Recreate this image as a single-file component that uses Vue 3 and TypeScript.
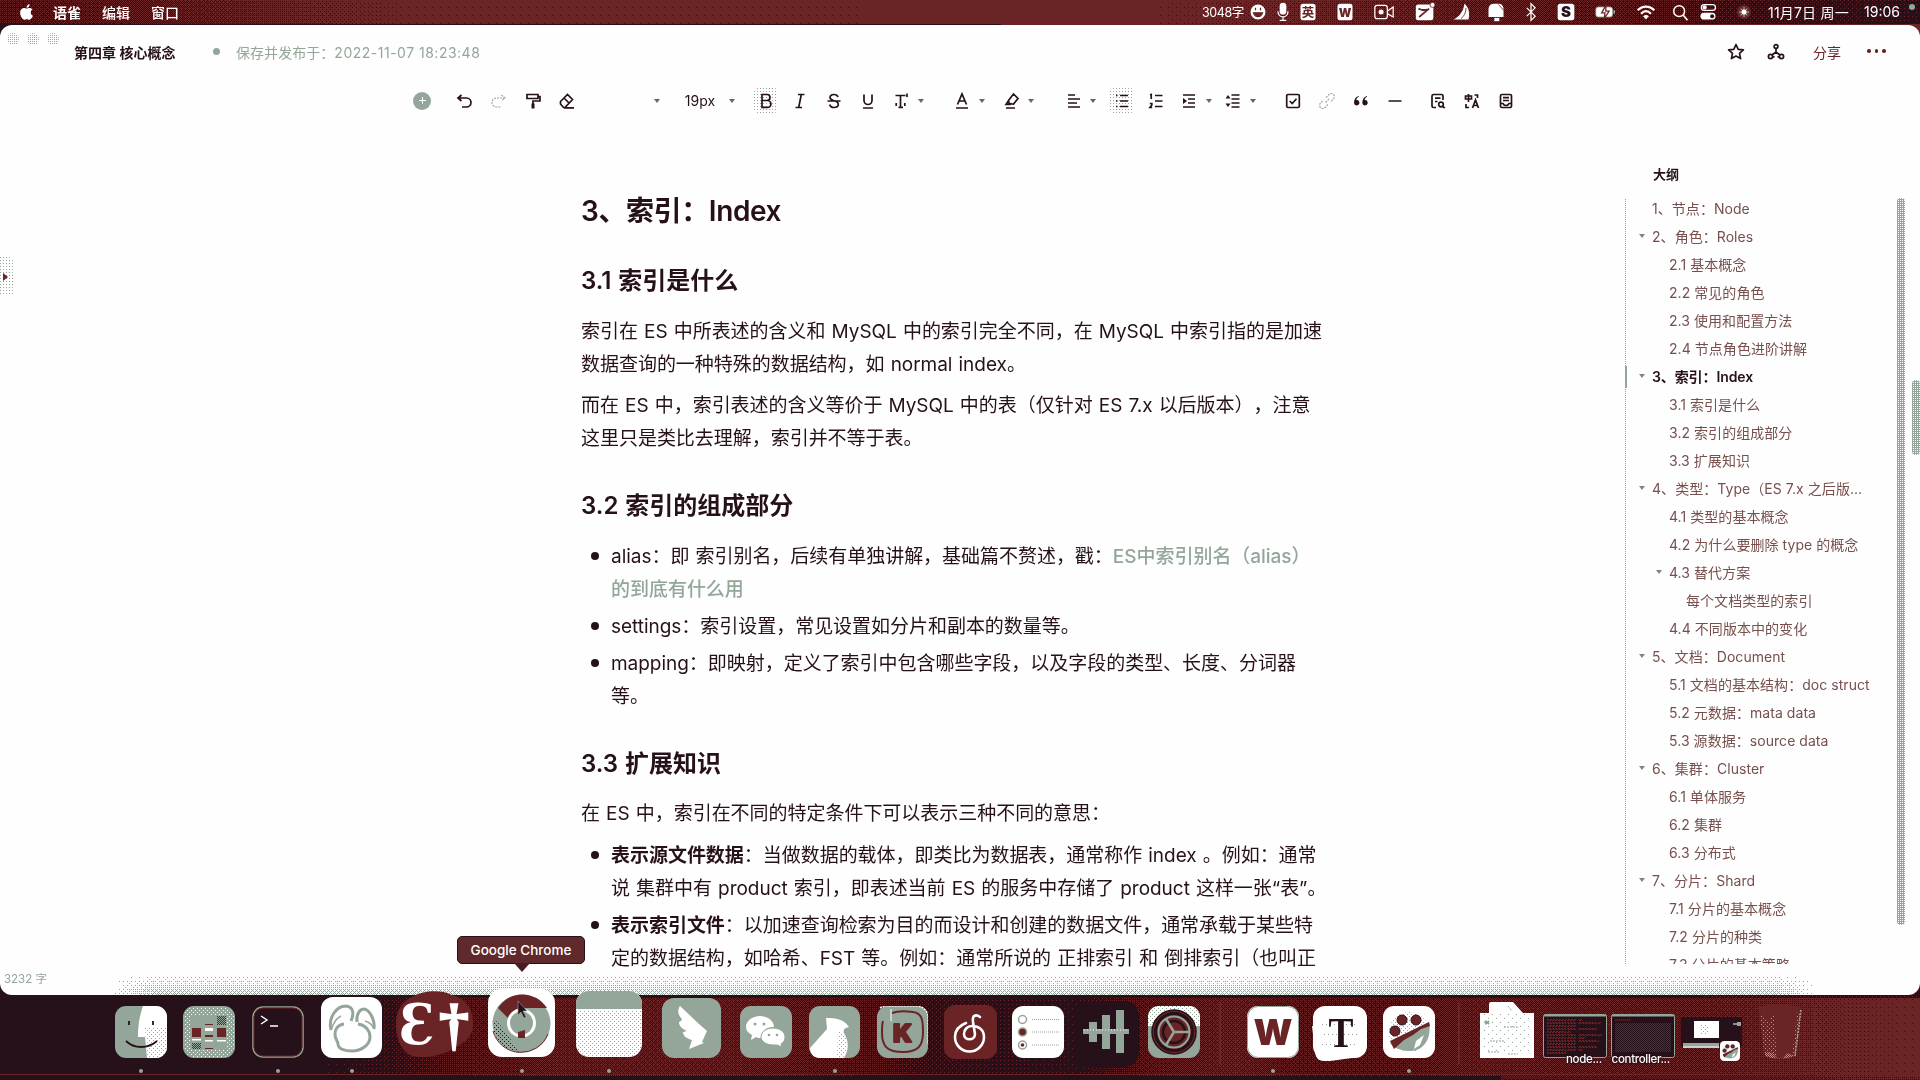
<script setup lang="ts">
import { onMounted, ref } from 'vue'

type Stop = [number, number]

const desk = ref<HTMLCanvasElement | null>(null)
const shade = ref<HTMLCanvasElement | null>(null)

const topStops: Stop[] = [[0, 0.3], [80, 0.42], [200, 0.58], [310, 0.82], [400, 0.98], [1150, 1], [1260, 0.88], [1430, 0.6], [1600, 0.42], [1720, 0.16], [1920, 0.05]]
const lowStops: Stop[] = [[0, 0], [320, 0], [390, 0.08], [480, 0.35], [560, 0.58], [720, 0.6], [800, 0.45], [880, 0.25], [930, 0.1], [1080, 0.03], [1150, 0.4], [1235, 0.65], [1300, 0.35], [1400, 0.35], [1480, 0.6], [1560, 0.52], [1700, 0.55], [1780, 0.72], [1850, 0.93], [1920, 1]]

const bayer = [
  0, 32, 8, 40, 2, 34, 10, 42, 48, 16, 56, 24, 50, 18, 58, 26,
  12, 44, 4, 36, 14, 46, 6, 38, 60, 28, 52, 20, 62, 30, 54, 22,
  3, 35, 11, 43, 1, 33, 9, 41, 51, 19, 59, 27, 49, 17, 57, 25,
  15, 47, 7, 39, 13, 45, 5, 37, 63, 31, 55, 23, 61, 29, 53, 21,
]

function tone(stops: Stop[], x: number): number {
  for (let i = 1; i < stops.length; i++) {
    const [x1, v1] = stops[i]
    const [x0, v0] = stops[i - 1]
    if (x <= x1) return v0 + ((v1 - v0) * (x - x0)) / (x1 - x0)
  }
  return stops[stops.length - 1][1]
}

function halftone(c: HTMLCanvasElement | null, rgb: number[], density: (x: number, y: number) => number) {
  const ctx = c?.getContext('2d')
  if (!c || !ctx) return
  const img = ctx.createImageData(c.width, c.height)
  for (let y = 0; y < c.height; y++) {
    for (let x = 0; x < c.width; x++) {
      const t = (bayer[(y % 8) * 8 + (x % 8)] + 0.5) / 64
      if (density(x, y) > t) {
        const i = (y * c.width + x) * 4
        img.data[i] = rgb[0]
        img.data[i + 1] = rgb[1]
        img.data[i + 2] = rgb[2]
        img.data[i + 3] = 255
      }
    }
  }
  ctx.putImageData(img, 0, 0)
}

onMounted(() => {
  halftone(desk.value, [107, 36, 37], (x, y) => {
    if (y < 24) return tone(topStops, x)
    if (y < 40) return x > 1000 ? 1 : 0
    if (y < 998) return x > 1700 ? 0.1 : 0
    if (y > 1075) return x > 1500 ? tone(lowStops, x) * 0.8 : 0.02
    return tone(lowStops, x)
  })
  halftone(shade.value, [147, 166, 153], (x, y) => {
    const edge = Math.min(1, x / 40, (1705 - x) / 40)
    return Math.max(0, ((y - 1) / 20) * 0.4 * edge)
  })
})

interface Icon { x: number; k: string; d?: string; f?: string; t?: string; w?: number }
// x is the centre of each control on the bar
const tools: Icon[] = [
  { x: 422, k: 'plus' },
  { x: 465, k: 'i', d: 'M6.5 4 3 7l3.5 3M3 7h8.5a4.5 4.5 0 0 1 0 9H7' },
  { x: 498, k: 'g', d: 'M13.5 4 17 7l-3.500 3M17 7H8.500a4.500 4.500 0 0 0 0 9H13' },
  { x: 533, k: 'i', d: 'M4 3.500h11v4H4zM15 5.500h2v4.500h-7v3', f: 'M8.500 12.500h3v5h-3z' },
  { x: 567, k: 'i', d: 'M3.500 10.500 10.500 3.500l5 5-7.500 8H6.500l-3-3.500zM7 7l5.500 5.500M7 16.800h10' },
  { x: 657, k: 'c' },
  { x: 700, k: 't', t: '19px', w: 40 },
  { x: 732, k: 'c' },
  { x: 766, k: 'on', d: 'M6 3.500h5a3 3 0 0 1 0 6H6zM6 9.500h5.500a3.300 3.300 0 0 1 0 6.800H6z' },
  { x: 800, k: 'i', d: 'M8 3.500h6.500M5.500 16.500H12M11.300 3.500 8.700 16.500' },
  { x: 834, k: 'i', d: 'M14 6c-.5-1.700-2-2.500-4-2.500-2.500 0-4 1.200-4 3 0 4 8.300 2.500 8.300 6.800 0 2-1.800 3.200-4.200 3.200-2.500 0-4-1-4.400-3M3.500 10h13' },
  { x: 868, k: 'i', d: 'M6 3.500v6a4 4 0 0 0 8 0v-6M5 17h10' },
  { x: 902, k: 'i', d: 'M3.500 4.500h10M8.500 4.500v11.500M6.500 16.300h4.500M4.200 12v3M12.800 12v3M15 2.500v3.500' },
  { x: 921, k: 'c' },
  { x: 962, k: 'i', d: 'M5.500 13.500 10 3l4.500 10.500M7 10h6M4 17h12' },
  { x: 982, k: 'c' },
  { x: 1012, k: 'i', d: 'M11.500 3 16 7.500l-4.500 5.500-4.500-.5-.5-3zM7 9l-3 4.500h4l1.500-1.500M4 17h9' },
  { x: 1031, k: 'c' },
  { x: 1074, k: 'i', d: 'M4 4h7M4 8h12M4 12h9M4 16h12' },
  { x: 1093, k: 'c' },
  { x: 1122, k: 'on', d: 'M8 4.500h8M8 10h8M8 15.500h8M4 4.500h1.500M4 10h1.500M4 15.500h1.500' },
  { x: 1156, k: 'i', d: 'M9 4.500h7.500M9 10h7.500M9 15.500h7.500M4 4l1.200-.5V8M3.800 12.500h2v1.500L4 16.500h2.200' },
  { x: 1189, k: 'i', d: 'M4 4h12M9 8h7M9 12h7M4 16h12', f: 'M4 7l4 3-4 3z' },
  { x: 1209, k: 'c' },
  { x: 1233, k: 'i', d: 'M8.500 4h8M8.500 8h8M8.500 12h8M8.500 16h8', f: 'M2.500 7.500 5 4l2.500 3.500zM2.500 12.500 5 16l2.500-3.500z' },
  { x: 1253, k: 'c' },
  { x: 1293, k: 'i', d: 'M5 3.500h10a1.300 1.300 0 0 1 1.300 1.300v10.400A1.300 1.300 0 0 1 15 16.500H5a1.300 1.300 0 0 1-1.300-1.300V4.800A1.300 1.300 0 0 1 5 3.500zM6.700 10l2.500 2.500 4.300-4.800' },
  { x: 1327, k: 'g', d: 'm8.500 11.500 4-4M9 6.500l3-3a3 3 0 0 1 4.500 4.500l-3 3M11 13.500l-3 3A3 3 0 0 1 3.500 12l3-3' },
  { x: 1361, k: 'i', f: 'M7.500 5c-3 1-4.500 3.500-4.500 7a2.700 2.700 0 1 0 2.300-3c.2-1.500 1-2.700 2.600-3.300zM15.800 5c-3 1-4.500 3.500-4.500 7a2.700 2.700 0 1 0 2.300-3c.2-1.500 1-2.700 2.600-3.300z' },
  { x: 1395, k: 'i', d: 'M3.500 10h13' },
  { x: 1438, k: 'i', d: 'M8 16.500H5.500a1.500 1.500 0 0 1-1.500-1.500V5a1.500 1.500 0 0 1 1.500-1.500h8A1.500 1.500 0 0 1 15 5v4M7 7.200h5.500M7 10.500h2.500M15.300 13.500a2.300 2.300 0 1 1-4.600 0 2.300 2.300 0 0 1 4.600 0M14.700 15.200l2 2' },
  { x: 1472, k: 'i', d: 'M3.500 5h6v3h-6zM6.500 3v8M12.500 4h3v3M4 13v3.500h3M10.500 17 13.500 9l3 8M11.500 14.500h4' },
  { x: 1506, k: 'i', d: 'M6 3.500h8A1.500 1.500 0 0 1 15.500 5v10a1.500 1.500 0 0 1-1.500 1.500H6A1.500 1.500 0 0 1 4.500 15V5A1.500 1.500 0 0 1 6 3.500zM7 6.700h6M7 9.500h6M4.500 12.500H7c.5 1.500 1.500 2 3 2s2.500-.5 3-2h2.500' },
]
const toolWidth = (t: Icon) => (t.k === 'c' ? 8 : t.k === 'on' ? 24 : t.w ?? 20)
const toolGap = (i: number) => {
  const t = tools[i]
  const left = t.x - toolWidth(t) / 2
  if (i === 0) return left
  const p = tools[i - 1]
  return left - (p.x + toolWidth(p) / 2)
}

interface Entry { t: string; l: number; c?: boolean; on?: boolean }
const outline: Entry[] = [
  { t: '1、节点：Node', l: 0 },
  { t: '2、角色：Roles', l: 0, c: true },
  { t: '2.1 基本概念', l: 1 },
  { t: '2.2 常见的角色', l: 1 },
  { t: '2.3 使用和配置方法', l: 1 },
  { t: '2.4 节点角色进阶讲解', l: 1 },
  { t: '3、索引：Index', l: 0, c: true, on: true },
  { t: '3.1 索引是什么', l: 1 },
  { t: '3.2 索引的组成部分', l: 1 },
  { t: '3.3 扩展知识', l: 1 },
  { t: '4、类型：Type（ES 7.x 之后版...', l: 0, c: true },
  { t: '4.1 类型的基本概念', l: 1 },
  { t: '4.2 为什么要删除 type 的概念', l: 1 },
  { t: '4.3 替代方案', l: 1, c: true },
  { t: '每个文档类型的索引', l: 2 },
  { t: '4.4 不同版本中的变化', l: 1 },
  { t: '5、文档：Document', l: 0, c: true },
  { t: '5.1 文档的基本结构：doc struct', l: 1 },
  { t: '5.2 元数据：mata data', l: 1 },
  { t: '5.3 源数据：source data', l: 1 },
  { t: '6、集群：Cluster', l: 0, c: true },
  { t: '6.1 单体服务', l: 1 },
  { t: '6.2 集群', l: 1 },
  { t: '6.3 分布式', l: 1 },
  { t: '7、分片：Shard', l: 0, c: true },
  { t: '7.1 分片的基本概念', l: 1 },
  { t: '7.2 分片的种类', l: 1 },
  { t: '7.3 分片的基本策略', l: 1 },
]

const G = '#93a699'
const R = '#6b2425'
const K = '#26111b'
const paw = `<rect width="52" height="52" rx="11" fill="#fff"/><circle cx="26" cy="26" r="20" fill="url(#dotG)"/><circle cx="19" cy="14" r="5" fill="${R}" stroke="${K}"/><circle cx="33" cy="14" r="5" fill="${R}" stroke="${K}"/><circle cx="12" cy="25" r="5" fill="${R}" stroke="${K}"/><path d="M7 37 46 16c3 16-5 29-19 29-7 0-15-2-20-8z" fill="${G}"/><path d="M7 35 46 16l1 4-9 3-8 6-9 5-10 9z" fill="${R}"/><path d="m33 35 8-6-4 10-6 4z" fill="#fff"/>`

interface App { x: number; w: number; h: number; b: number; vb: string; art: string; run?: boolean; cap?: string }
// b is the distance from the bottom of the icon to the bottom of the row
const apps: App[] = [
  { x: 115, w: 52, h: 52, b: 0, vb: '0 0 52 52', run: true, art: `<rect width="52" height="52" rx="11" fill="${G}"/><path d="M28 0h13a11 11 0 0 1 11 11v30a11 11 0 0 1-11 11h-9l-2-21h-7c0-14 2-22 5-31z" fill="#fff"/><path d="M30 22h22v19a11 11 0 0 1-11 11h-9z" fill="url(#dotG)"/><path d="M14 15v4M38 15v4M11 35c8 8 22 8 31 0" fill="none" stroke="${K}" stroke-width="1.800"/>` },
  { x: 183, w: 52, h: 52, b: 0, vb: '0 0 52 52', art: `<rect width="52" height="52" rx="11" fill="${G}"/><rect x="1" y="1" width="50" height="50" rx="10" fill="url(#dotW)"/><rect x="8" y="10" width="36" height="34" fill="${G}"/><path d="M9 22h9v9H9zM34 22h9v9h-9z" fill="${R}"/><path d="M34 10h9v9h-9zM9 37h9v6H9z" fill="url(#dotR)"/><path d="M22 22h8v3h-8zM9 33h9v1.500H9zM22 34h8v1.500h-8zM34 34h9v1.500h-9z" fill="#fff"/><path d="M22 29h8v2h-8zM22 42h8v1h-8zM22 18h8v1h-8z" fill="${R}"/>` },
  { x: 252, w: 52, h: 52, b: 0, vb: '0 0 52 52', run: true, art: `<rect x="1" y="1" width="50" height="50" rx="10" fill="${K}" stroke="${G}" stroke-width="1.500"/><rect x="2" y="2" width="48" height="48" rx="9" fill="none" stroke="${R}"/><path d="M9 10l6 4-6 4M18 20h8" fill="none" stroke="#fff" stroke-width="1.500"/>` },
  { x: 321, w: 61, h: 61, b: 0, vb: '0 0 61 61', run: true, art: `<rect width="61" height="61" rx="12" fill="#fff"/><g fill="none" stroke="${G}" stroke-width="3"><path d="M10 33C7 21 15 9 25 9c8 1 8 8 5 15M36 25c-1-8 3-13 7-13 6 1 11 11 10 20"/><path d="M23 27c-7 1-9 6-9 10 0 6 3 7 3 10 0 5 7 7 14 7 9 0 18-6 18-14 0-7-5-12-12-13"/><path d="M10 33c2-6 5-12 10-14" stroke-width="1.500"/><path d="M53 32c-2-5-5-7-9-8" stroke-width="1.500"/></g>` },
  { x: 395, w: 79, h: 66, b: 1, vb: '0 0 79 66', art: `<path d="M19 5C28 0 45-2 57 4c15 3 22 17 21 30 0 12-10 19-20 24-13 7-33 12-45 5C-1 52-2 26 6 15c3-5 8-8 13-10z" fill="${R}"/><text x="4" y="53" font-family="DejaVu Serif" font-weight="bold" font-size="56" textLength="36" lengthAdjust="spacingAndGlyphs" fill="#fff">Ɛ</text><text x="44" y="53" font-family="Liberation Serif" font-weight="bold" font-size="58" textLength="30" lengthAdjust="spacingAndGlyphs" fill="#fff" stroke="#fff" stroke-width="1.500">†</text>` },
  { x: 488, w: 67, h: 68, b: 1, vb: '0 0 67 68', run: true, art: `<rect width="67" height="68" rx="14" fill="#fff"/><circle cx="33.500" cy="34.500" r="29" fill="${G}"/><path d="M10 19a29 29 0 0 1 49 0H34c-8 0-12 6-13 11z" fill="${R}"/><path d="M5 30c8 4 17 20 26 33C13 62 3 45 5 30z" fill="url(#dotK)"/><circle cx="33.500" cy="34" r="14.500" fill="#fff"/><circle cx="33.500" cy="34" r="11.500" fill="${G}"/><path d="M5 42a29 29 0 0 0 55 3" fill="none" stroke="${R}"/><path d="M30 43l7-2v8h-7z" fill="${R}"/>` },
  { x: 576, w: 66, h: 66, b: 1, vb: '0 0 66 66', run: true, art: `<rect width="66" height="66" rx="13" fill="#fff"/><path d="M0 18V13A13 13 0 0 1 13 0h40a13 13 0 0 1 13 13v5z" fill="${G}"/><path d="M0 19h66v34a13 13 0 0 1-13 13H13A13 13 0 0 1 0 53z" fill="url(#dotG)"/>` },
  { x: 662, w: 59, h: 60, b: 0, vb: '0 0 59 60', art: `<rect width="59" height="60" rx="12" fill="${G}"/><path d="M18 8l19 18 8 7-5 11 2 1-15 6 3-9c-7-2-9-5-9-8l4-1c-5-2-8-5-8-9 2-1 2-1 3-3-4-4-5-9-2-13z" fill="#fff"/>` },
  { x: 740, w: 52, h: 52, b: 0, vb: '0 0 52 52', art: `<rect width="52" height="52" rx="11" fill="${G}"/><path d="M20 10c8 0 14 5 14 11-8 0-13 4-13 11-2 0-4 0-5-1l-5 3 1-5c-4-2-6-5-6-8 0-6 6-11 14-11z" fill="#fff"/><path d="M33 22c7 0 12 4 12 9 0 3-1 5-4 7l1 3-5-2h-4c-7 0-12-4-12-8 0-5 5-9 12-9z" fill="#fff" stroke="${G}"/><g fill="${G}"><circle cx="15" cy="18" r="1.500"/><circle cx="24" cy="18" r="1.500"/><circle cx="29" cy="29" r="1.300"/><circle cx="37" cy="29" r="1.300"/></g>` },
  { x: 809, w: 51, h: 52, b: 0, vb: '0 0 51 52', run: true, art: `<rect width="51" height="52" rx="11" fill="${G}"/><path d="M17 12c8 0 17 0 23 9-4 1-6 2-5 6 5 8 5 17 0 25H11C5 52 1 48 1 42l17-19z" fill="#fff"/><path d="M29 26h5c6 9 5 18 0 26h-6z" fill="url(#dotG)"/>` },
  { x: 877, w: 51, h: 52, b: 0, vb: '0 0 51 52', art: `<rect width="51" height="52" rx="11" fill="${G}"/><path d="M3 2c3-2 5-2 9-2h27c7 0 12 5 12 11v27" fill="none" stroke="#fff" stroke-width="1.500" stroke-dasharray="2 1"/><path d="M15 7c5-2 14-2 21-1 9 1 10 8 10 20 0 14-5 20-20 20S5 41 5 27c0-6 0-9 1-12" fill="none" stroke="${R}" stroke-width="2"/><path d="M14 3v12" stroke="#fff"/><text x="25.500" y="35.500" text-anchor="middle" font-family="Inter" font-weight="900" font-size="25" fill="${R}" stroke="${R}" stroke-width="2" stroke-linejoin="round">K</text>` },
  { x: 944, w: 53, h: 54, b: -1, vb: '0 0 53 54', art: `<rect width="53" height="54" rx="11" fill="${R}"/><path d="M22 18c-8 3-11 8-11 14a14.500 14.500 0 0 0 29 0c0-7-5-11-12-11-5 0-8 4-8 8 0 7 11 7 11 0l-2-12c-1-7 3-8 7-5" fill="none" stroke="#fff" stroke-width="2.600" stroke-linecap="round"/>` },
  { x: 1012, w: 52, h: 52, b: 0, vb: '0 0 52 52', art: `<rect width="52" height="52" rx="11" fill="#fff"/><g fill="#fff" stroke="${G}" stroke-width="1.500"><circle cx="10.500" cy="13.500" r="4"/><circle cx="10.500" cy="26" r="4" fill="${R}"/><circle cx="10.500" cy="39" r="4"/></g><circle cx="10.500" cy="39" r="1.800" fill="${R}"/><path d="M20 13.500h27M20 26h27M20 39h27" stroke="${G}" stroke-dasharray="1 1"/>` },
  { x: 1073, w: 66, h: 66, b: -9, vb: '0 0 66 66', art: `<rect width="66" height="66" rx="15" fill="${K}"/><path d="M10 28h46v5H10z" fill="${G}"/><path d="M16 21h8v20h-8zM29 14h8v34h-8zM43 9h8v43h-8z" fill="${G}"/><path d="M11 29h44" stroke="#fff" stroke-dasharray="1 2"/>` },
  { x: 1148, w: 52, h: 52, b: 0, vb: '0 0 52 52', art: `<rect width="52" height="52" rx="11" fill="${G}"/><path d="M0 20v-9A11 11 0 0 1 11 0h30a11 11 0 0 1 11 11v9z" fill="#fff"/><rect width="52" height="52" rx="11" fill="url(#dotG)"/><circle cx="26" cy="26" r="22" fill="${R}" stroke="${K}" stroke-width="1.500"/><circle cx="26" cy="26" r="18.500" fill="none" stroke="${K}" stroke-width="3"/><circle cx="26" cy="26" r="15.500" fill="none" stroke="${G}" stroke-width="2"/><circle cx="26" cy="26" r="11" fill="none" stroke="${K}" stroke-width="2.500"/><path d="M26 26h15M26 26l-8-13M26 26l-8 13" stroke="${G}" stroke-width="2.500"/>` },
  { x: 1219, w: 2, h: 62, b: -6, vb: '0 0 2 62', art: `<path d="M1 0v62" stroke="${R}" stroke-width="2"/>` },
  { x: 1247, w: 52, h: 52, b: 0, vb: '0 0 52 52', run: true, art: `<rect width="52" height="52" rx="11" fill="#fff"/><rect x=".5" y=".5" width="51" height="51" rx="11" fill="none" stroke="${G}"/><text x="26" y="39" text-anchor="middle" font-family="Inter" font-weight="900" font-size="36" textLength="39" lengthAdjust="spacingAndGlyphs" fill="${R}">W</text>` },
  { x: 1312, w: 55, h: 55, b: -3, vb: '0 0 55 55', art: `<rect x="1" width="54" height="52" rx="12" fill="#fff"/><path d="M0 20h40v32l-22 3H12C6 55 3 51 3 45z" fill="#fff"/><path d="M10 18h35v2H10zM10 28h35v1H10zM10 38h35v1H10z" fill="url(#dotG)"/><text x="29" y="41" text-anchor="middle" font-family="Liberation Serif" font-weight="bold" font-size="43" textLength="25" lengthAdjust="spacingAndGlyphs" fill="${K}">T</text>` },
  { x: 1383, w: 52, h: 52, b: 0, vb: '0 0 52 52', run: true, art: paw },
  { x: 1458, w: 2, h: 62, b: -6, vb: '0 0 2 62', art: `<path d="M1 0v62" stroke="${R}" stroke-width="2"/>` },
  { x: 1480, w: 54, h: 56, b: 0, vb: '0 0 54 56', art: `<path d="M0 11h9V2q0-2 2-2h22l10 11h11v45H0z" fill="#fff"/><rect x="1" y="12" width="51" height="40" fill="url(#dotS)"/><path d="M28 4l4 5M5 19h4v3H5zM10 39h14M24 25h14M28 52h10M8 50h12" stroke="${G}" stroke-dasharray="2 1" fill="${G}"/>` },
  { x: 1543, w: 64, h: 52, b: -8, vb: '0 0 64 52', cap: 'node...', art: `<rect x=".5" y=".5" width="63" height="43" rx="2" fill="${K}" stroke="${G}"/><path d="M1 1.500h62" stroke="${G}" stroke-width="2"/><path d="M4 6h36M4 9h54M4 12h30M4 15h50M4 18h24M4 21h55M4 24h38M4 27h52M4 30h30M4 33h50M4 36h36M4 39h20" stroke="url(#dotR2)" stroke-width="2" stroke-dasharray="19 1 9 2"/>` },
  { x: 1611, w: 64, h: 52, b: -8, vb: '0 0 64 52', cap: 'controller...', art: `<rect x=".5" y=".5" width="63" height="43" rx="2" fill="${K}" stroke="${G}"/><path d="M1 1.500h62" stroke="${G}" stroke-width="2"/><rect x="4" y="9" width="56" height="29" fill="url(#dotR)"/><path d="M4 6h16" stroke="${R}"/>` },
  { x: 1681, w: 62, h: 45, b: -4, vb: '0 0 62 45', art: `<rect width="61" height="30" fill="${K}"/><path d="M13 4h25v17H13z" fill="#fff"/><path d="M20 8h7v9h-7z" fill="url(#dotG)"/><path d="M2 26h36v5H2z" fill="${G}"/><path d="M2 30h36M52 7h4" stroke="#fff"/><path d="M56 5h4v4h-4z" fill="${G}"/><svg x="39" y="24" width="20" height="20" viewBox="0 0 52 52">${paw}</svg>` },
  { x: 1757, w: 46, h: 56, b: -2, vb: '0 0 46 56', art: `<path d="M1 3Q23-3 45 4L38 52Q22 58 8 52z" fill="${R}"/><path d="M5 11l4 38M15 12l3 41M42 9l-5 43M10 15l4 36" stroke="url(#dotG)" stroke-width="4"/><path d="M8 50Q13 45 18 52T30 49L38 52Q22 57 8 52z" fill="url(#dotG2)"/><path d="M44 6 38 52" stroke="${G}" stroke-width="1.500" stroke-dasharray="2 1"/>` },
]
const appGap = (i: number) => (i === 0 ? apps[0].x : apps[i].x - apps[i - 1].x - apps[i - 1].w)

// status icons on a 24-unit grid
interface Status { x: number; s: string; w?: number }
const status: Status[] = [
  { x: 1258, s: '<circle cx="12" cy="12" r="9" fill="#fff"/><path d="M9 7v3M15 7v3M6.500 13c2 6 9 6 11 0z" stroke="#6b2425" stroke-width="1.500" fill="#6b2425"/>' },
  { x: 1283, s: '<rect x="8" y="1" width="8" height="14" rx="4" fill="#fff"/><path d="M6 11c0 9 12 9 12 0M12 18v4M8 22h8" stroke="#fff" stroke-width="1.500" fill="none"/>' },
  { x: 1308, s: '<rect x="3" y="2" width="18" height="20" rx="3" fill="#fff"/><text x="12" y="17.500" font-size="15" font-weight="bold" text-anchor="middle" font-family="Noto Sans CJK SC" fill="#6b2425">英</text>' },
  { x: 1345, s: '<rect x="3" y="2" width="18" height="20" rx="3" fill="#fff"/><text x="12" y="17.500" font-size="14" font-weight="900" text-anchor="middle" font-family="Inter" fill="#6b2425">W</text>' },
  { x: 1384, s: '<rect x="1" y="4" width="15" height="16" rx="3" fill="none" stroke="#fff" stroke-width="1.500"/><circle cx="8.500" cy="12" r="3" fill="#fff"/><path d="M16 11l7-5v12l-7-4" fill="none" stroke="#fff" stroke-width="1.500"/>' },
  { x: 1425, s: '<rect x="1" y="3" width="21" height="19" rx="3" fill="#fff"/><path d="M5 18 17 8M4 8l6 2 5-1" stroke="#6b2425" stroke-width="2"/><circle cx="21" cy="3.500" r="3" fill="#fff" stroke="#6b2425"/>' },
  { x: 1461, s: '<path d="M16 2c5 4 7 10 5 19H3c6-3 12-9 13-19z" fill="#fff"/><path d="M12 20c4-3 6-8 6-13" stroke="#6b2425" fill="none"/>' },
  { x: 1496, s: '<path d="M3 18V9q0-7 7-7h5q6 0 6 7v9z" fill="#fff"/><path d="M10 19h6v4h-6z" fill="#fff"/><path d="m15 3 6 7" stroke="#6b2425"/>' },
  { x: 1531, s: '<path d="M7 7l10 10-5 5V2l5 5L7 17" fill="none" stroke="#fff" stroke-width="1.500"/>' },
  { x: 1566, s: '<rect x="2" y="2" width="20" height="20" rx="3" fill="#fff"/><text x="12" y="18.500" font-size="18" font-weight="900" text-anchor="middle" font-family="Inter" fill="#26111b">S</text>' },
  { x: 1605, s: '<rect x="1" y="6" width="20" height="12" rx="3" fill="#fff" stroke="#93a699"/><path d="M13 4 8 13h4l-1 7 6-9h-4z" fill="#fff" stroke="#6b2425" stroke-width="1.500"/><path d="M23 10v4" stroke="#93a699" stroke-width="2"/>' },
  { x: 1646, s: '<path d="M2 10c6-6 14-6 20 0M6 14c4-4 8-4 12 0" fill="none" stroke="#fff" stroke-width="2.600"/><path d="M8.500 17q3.500-3 7 0L12 21z" fill="#fff"/>' },
  { x: 1680, s: '<circle cx="11" cy="11" r="6.500" fill="none" stroke="#fff" stroke-width="1.800"/><path d="m16 16 5 6" stroke="#fff" stroke-width="2"/>' },
  { x: 1708, s: '<rect x="4" y="3" width="17" height="7" rx="3.500" fill="none" stroke="#fff" stroke-width="1.500"/><rect x="3" y="13" width="18" height="8" rx="4" fill="#fff"/><circle cx="8" cy="6.500" r="2.500" fill="#fff"/><circle cx="17" cy="17" r="2.400" fill="#26111b"/>' },
  { x: 1744, s: '<circle cx="12" cy="12" r="8.500" fill="#6b2425"/><path d="M12 6v12M6 12h12M8 8l8 8M16 8l-8 8" stroke="#93a699" stroke-width="1.500"/><circle cx="12" cy="12" r="3" fill="#fff"/>' },
]
const statusGap = (i: number) => status[i].x - 10 - (i === 0 ? 1241 : status[i - 1].x + 10)
</script>

<template>
  <div class="screen">
    <canvas ref="desk" class="desk" width="1920" height="1080"></canvas>
    <svg class="defs" width="0" height="0">
      <defs>
        <pattern id="dotG" width="4" height="4" patternUnits="userSpaceOnUse"><path d="M0 0h1v1H0zM2 2h1v1H2z" fill="#93a699" /></pattern>
        <pattern id="dotG2" width="2" height="2" patternUnits="userSpaceOnUse"><path d="M0 0h1v1H0zM1 1h1v1H1z" fill="#93a699" /></pattern>
        <pattern id="dotS" width="8" height="8" patternUnits="userSpaceOnUse"><path d="M0 0h1v1H0zM4 4h1v1H4z" fill="#93a699" /></pattern>
        <pattern id="dotW" width="4" height="4" patternUnits="userSpaceOnUse"><path d="M0 0h1v1H0zM2 2h1v1H2z" fill="#fff" /></pattern>
        <pattern id="dotK" width="4" height="4" patternUnits="userSpaceOnUse"><path d="M0 0h1v1H0zM2 2h1v1H2z" fill="#26111b" /></pattern>
        <pattern id="dotR" width="2" height="2" patternUnits="userSpaceOnUse"><path d="M0 0h1v1H0zM1 1h1v1H1z" fill="#6b2425" /></pattern>
        <pattern id="dotR2" width="3" height="2" patternUnits="userSpaceOnUse"><path d="M0 0h2v1H0zM1 1h2v1H1z" fill="#6b2425" /></pattern>
      </defs>
    </svg>

    <header class="menubar">
      <svg class="apple" width="13" height="16" viewBox="2 0 20 24"><path fill="#fff" d="M12.152 6.896c-.948 0-2.415-1.078-3.960-1.040-2.040.027-3.910 1.183-4.961 3.014-2.117 3.675-.546 9.103 1.519 12.090 1.013 1.454 2.208 3.090 3.792 3.039 1.520-.065 2.090-.987 3.935-.987 1.831 0 2.350.987 3.960.948 1.637-.026 2.676-1.480 3.676-2.948 1.156-1.688 1.636-3.325 1.662-3.415-.039-.013-3.182-1.221-3.220-4.857-.026-3.040 2.480-4.494 2.597-4.559-1.429-2.090-3.623-2.324-4.390-2.376-2-.156-3.675 1.090-4.610 1.090zM15.530 3.830c.843-1.012 1.400-2.427 1.245-3.830-1.207.052-2.662.805-3.532 1.818-.780.896-1.454 2.338-1.273 3.714 1.338.104 2.715-.688 3.559-1.701" /></svg>
      <nav class="menus"><b>语雀</b><span>编辑</span><span>窗口</span></nav>
      <span class="count">3048字</span>
      <span v-for="(s, i) in status" :key="s.x" class="stat" :style="{ marginLeft: statusGap(i) + 'px' }">
        <svg width="20" height="20" viewBox="0 0 24 24" v-html="s.s"></svg>
      </span>
      <span class="date">11月7日 周一</span>
      <span class="clock">19:06</span>
      <i class="mic"></i>
    </header>

    <main class="window">
      <div class="lights"><i></i><i></i><i></i></div>
      <div class="titlebar">
        <b class="title">第四章 核心概念</b>
        <i class="bullet"></i>
        <span class="saved">保存并发布于：<span class="stamp">2022-11-07 18:23:48</span></span>
        <svg class="star" width="20" height="20" viewBox="0 0 20 20"><path d="M10 2.500l2.200 4.800 5.200.6-3.900 3.500 1.100 5.200L10 14l-4.600 2.600 1.100-5.200-3.900-3.500 5.200-.6z" /></svg>
        <svg class="nodes" width="20" height="20" viewBox="0 0 20 20"><circle cx="10" cy="4.500" r="1.900" /><circle cx="4.500" cy="14.500" r="2.100" /><circle cx="15.500" cy="14.500" r="2.100" /><path d="M10 6.500V10M10 10l-4 3M10 10l4 3M7 14.800h1.500M11.500 14.800H13" /></svg>
        <button class="share">分享</button>
        <span class="more"><i></i><i></i><i></i></span>
      </div>

      <div class="toolbar">
        <span v-for="(t, i) in tools" :key="t.x" class="tool" :class="t.k" :style="{ marginLeft: toolGap(i) + 'px', width: toolWidth(t) + 'px' }">
          <span v-if="t.k === 'plus'" class="add"></span>
          <i v-else-if="t.k === 'c'" class="caret"></i>
          <span v-else-if="t.t">{{ t.t }}</span>
          <svg v-else width="20" height="20" viewBox="0 0 20 20">
            <path v-if="t.d" :d="t.d" class="line" />
            <path v-if="t.f" :d="t.f" class="solid" />
          </svg>
        </span>
      </div>

      <div class="body">
        <button class="handle"><i></i></button>
        <article class="doc">
          <h2>3、索引：Index</h2>
          <h3>3.1 索引是什么</h3>
          <p>索引在 ES 中所表述的含义和 MySQL 中的索引完全不同，在 MySQL 中索引指的是加速<br>数据查询的一种特殊的数据结构，如 normal index。</p>
          <p class="next">而在 ES 中，索引表述的含义等价于 MySQL 中的表（仅针对 ES 7.x 以后版本），注意<br>这里只是类比去理解，索引并不等于表。</p>
          <h3 class="second">3.2 索引的组成部分</h3>
          <ul>
            <li>alias：即 索引别名，后续有单独讲解，基础篇不赘述，戳：<a>ES中索引别名（alias）<br>的到底有什么用</a></li>
            <li>settings：索引设置，常见设置如分片和副本的数量等。</li>
            <li>mapping：即映射，定义了索引中包含哪些字段，以及字段的类型、长度、分词器<br>等。</li>
          </ul>
          <h3 class="third">3.3 扩展知识</h3>
          <p>在 ES 中，索引在不同的特定条件下可以表示三种不同的意思：</p>
          <ul class="tight">
            <li><b>表示源文件数据</b>：当做数据的载体，即类比为数据表，通常称作 index 。例如：通常<br>说 集群中有 product 索引，即表述当前 ES 的服务中存储了 product 这样一张“表”。</li>
            <li><b>表示索引文件</b>：以加速查询检索为目的而设计和创建的数据文件，通常承载于某些特<br>定的数据结构，如哈希、FST 等。例如：通常所说的 正排索引 和 倒排索引（也叫正</li>
          </ul>
        </article>
        <aside class="outline">
          <b class="head">大纲</b>
          <div class="tree">
            <div v-for="e in outline" :key="e.t" class="row" :class="['l' + e.l, { on: e.on }]">
              <span class="fold"><i v-if="e.c" class="caret"></i></span>
              <span>{{ e.t }}</span>
            </div>
          </div>
        </aside>
        <div class="scroll inner"></div>
        <div class="scroll outer"></div>
      </div>
      <div class="words">3232 字</div>
      <canvas ref="shade" class="shade" width="1705" height="22"></canvas>
    </main>

    <footer class="dock">
      <div v-for="(a, i) in apps" :key="a.x" class="app" :style="{ marginLeft: appGap(i) + 'px', width: a.w + 'px', marginBottom: a.b + 'px' }">
        <svg :width="a.w" :height="a.h" :viewBox="a.vb" v-html="a.art"></svg>
        <span v-if="a.cap" class="cap">{{ a.cap }}</span>
        <i v-if="a.run" class="dot" :style="{ bottom: -15 - a.b + 'px' }"></i>
      </div>
    </footer>
    <div class="tip">Google Chrome</div>
    <svg class="pointer" width="14" height="20" viewBox="0 0 14 20"><path d="M2 1v14l3-3 3 6 2-1-3-6h4z" fill="#26111b" stroke="#93a699" stroke-width=".6" /></svg>
  </div>
</template>

<style>
html,
body {
  margin: 0;
  overflow: hidden;
}
</style>

<style scoped>
.screen {
  --ink: #26111b;
  --red: #6b2425;
  --sage: #93a699;
  position: relative;
  width: 1920px;
  height: 1080px;
  overflow: hidden;
  background: var(--ink);
  color: var(--ink);
  font-family: Inter, "Noto Sans CJK SC", sans-serif;
  text-spacing-trim: space-all;
}
.desk { position: absolute; left: 0; top: 0; }
.defs { position: absolute; }
svg { display: block; }

.menubar {
  position: relative;
  height: 25px;
  padding-bottom: 2px;
  box-sizing: border-box;
  display: flex;
  align-items: center;
  color: #fff;
  font-size: 14px;
  white-space: nowrap;
}
.apple { margin-left: 20px; flex: none; }
.menus { display: flex; gap: 21px; margin-left: 20px; width: 200px; font-weight: 500; }
.count { width: 39px; margin-left: 949px; font-size: 12.500px; letter-spacing: -.4px; }
.stat { width: 20px; flex: none; }
.date { margin-left: 14px; width: 96px; letter-spacing: .2px; }
.clock { width: 42px; }
.mic { width: 6px; height: 6px; border-radius: 50%; background: var(--sage); margin: -10px 0 0 3px; }

.window {
  position: relative;
  height: 970px;
  background: #fefefe;
  border-radius: 12px;
  overflow: hidden;
}
.lights { position: absolute; left: 7px; top: 8px; display: flex; gap: 8px; }
.lights i {
  width: 12px;
  height: 12px;
  border-radius: 50%;
  background: conic-gradient(var(--sage) 25%, transparent 0 50%, var(--sage) 0 60%, transparent 0) 0 0 / 2px 2px;
}
.titlebar { height: 55px; padding-bottom: 2px; box-sizing: border-box; display: flex; align-items: center; font-size: 14px; white-space: nowrap; }
.title { margin-left: 74px; width: 139px; font-weight: 600; }
.bullet { width: 7px; height: 7px; border-radius: 50%; background: var(--sage); }
.saved { margin-left: 16px; width: 1490px; color: var(--sage); letter-spacing: .05px; }
.stamp { letter-spacing: .5px; }
.star, .nodes { flex: none; fill: none; stroke: var(--ink); stroke-width: 1.700; stroke-linejoin: round; }
.nodes { margin-left: 20px; }
.share {
  margin-left: 17px;
  width: 48px;
  height: 30px;
  padding: 0;
  border: 0;
  background: none;
  color: var(--red);
  font: 14px Inter, "Noto Sans CJK SC", sans-serif;
}
.more { display: flex; gap: 4px; margin: -1px 0 0 16px; }
.more i { width: 3.500px; height: 3.500px; border-radius: 50%; background: var(--red); }

.toolbar { height: 41px; display: flex; align-items: center; }
.tool { flex: none; height: 25px; display: flex; align-items: center; justify-content: center; font-size: 14px; }
.line { fill: none; stroke: var(--ink); stroke-width: 1.700; }
.solid { fill: var(--ink); }
.g .line { stroke: var(--sage); stroke-width: 1.100; stroke-dasharray: 2 1; }
.on.tool {
  border-radius: 4px;
  background: radial-gradient(circle at .5px .5px, var(--sage) .7px, transparent .8px) 0 0 / 3px 3px;
}
.add {
  width: 18px;
  height: 18px;
  border-radius: 50%;
  background: linear-gradient(#fff, #fff) center / 7px 1px no-repeat, linear-gradient(#fff, #fff) center / 1px 7px no-repeat, var(--sage);
}
.caret {
  display: block;
  width: 0;
  height: 0;
  border: 3.500px solid transparent;
  border-top: 4px solid #75605a;
  border-bottom: 0;
}

.body { height: 874px; display: flex; position: relative; }
.handle {
  flex: none;
  width: 14px;
  height: 39px;
  margin: 136px 567px 0 0;
  padding: 0;
  border: 0;
  border-radius: 0 5px 5px 0;
  background: radial-gradient(circle at .5px .5px, var(--sage) .7px, transparent .8px) 0 0 / 3px 3px;
}
.handle i { display: block; width: 0; margin-left: 3px; border: 4px solid transparent; border-left: 5px solid var(--red); border-right: 0; }
.doc { width: 1044px; flex: none; font-size: 19px; line-height: 33px; letter-spacing: -.03px; word-spacing: .8px; white-space: nowrap; }
.doc h2 { margin: 70px 0 0; font-size: 28px; line-height: 40px; font-weight: 600; letter-spacing: -.4px; }
.doc h3 { margin: 34px 0 17.500px; font-size: 24px; line-height: 32px; font-weight: 600; letter-spacing: 0; }
.doc p { margin: 0; }
.doc .next { margin-top: 8px; }
.doc .second { margin: 35.500px 0 18px; }
.doc .third { margin-top: 34.500px; }
.doc ul { list-style: none; margin: 0; padding: 0; }
.doc .tight { margin-top: 8.500px; }
.doc li { position: relative; padding-left: 30px; margin-bottom: 4px; }
.doc li:last-child { margin-bottom: 0; }
.doc li::before { content: ""; position: absolute; left: 10px; top: 12px; width: 8px; height: 8px; border-radius: 50%; background: var(--ink); }
.doc b { font-weight: 600; }
.doc a { color: var(--sage); font-weight: 500; }

.outline { width: 272px; flex: none; }
.head { display: block; margin: 43px 0 15px 28px; font-size: 13px; line-height: 20px; }
.tree {
  height: 765px;
  overflow: hidden;
  background: repeating-linear-gradient(var(--sage) 0 1px, transparent 1px 2px) 0 0 / 1px 100% no-repeat;
}
.row { position: relative; height: 28px; display: flex; align-items: center; top: -5px; font-size: 14px; letter-spacing: .05px; color: #77504d; white-space: nowrap; }
.row.on { color: var(--ink); font-weight: 600; letter-spacing: -.1px; }
.row.on::before { content: ""; position: absolute; left: 0; top: 4px; width: 2px; height: 22px; background: var(--sage); }
.fold { width: 9px; padding-left: 14px; margin-right: 4px; }
.l1 .fold { padding-left: 31px; }
.l2 .fold { padding-left: 48px; }
.row .caret { border-top-color: #80857c; }
.scroll { flex: none; width: 8px; border-radius: 4px; background: conic-gradient(#fefefe 25%, var(--sage) 0) 0 0 / 2px 2px; }
.inner { height: 727px; margin-top: 77px; }
.outer { height: 75px; margin: 259px 0 0 7px; }
.words { position: absolute; left: 4px; bottom: 7px; font-size: 11.500px; line-height: 18px; color: var(--sage); }
.shade { position: absolute; left: 111px; bottom: 0; }

.dock {
  position: absolute;
  left: 0;
  bottom: 5px;
  width: 1815px;
  height: 79px;
  padding-bottom: 16px;
  box-sizing: border-box;
  display: flex;
  align-items: flex-end;
  border-bottom: 1px solid var(--red);
  border-right: 1px solid var(--red);
  border-radius: 0 14px 14px 0;
}
.app { position: relative; flex: none; }
.dot { position: absolute; left: calc(50% - 2px); width: 4px; height: 4px; border-radius: 50%; background: var(--sage); }
.cap { position: absolute; right: 5px; bottom: -1px; white-space: nowrap; font-size: 11.500px; line-height: 16px; letter-spacing: -.3px; color: #fff; font-weight: 500; text-shadow: 0 0 2px var(--ink), 0 0 2px var(--ink), 0 1px 2px var(--ink); }
.tip {
  position: absolute;
  left: 457px;
  top: 936px;
  width: 128px;
  height: 28px;
  box-sizing: border-box;
  border: 1px solid var(--ink);
  border-radius: 5px;
  background: #602a2c;
  color: #fff;
  font-size: 13.500px;
  font-weight: 500;
  line-height: 26px;
  text-align: center;
}
.tip::after { content: ""; position: absolute; left: 56px; top: 26px; border: 8px solid transparent; border-top: 9px solid #4a1c22; border-bottom: 0; }
.pointer { position: absolute; left: 516px; top: 1000px; }
</style>
